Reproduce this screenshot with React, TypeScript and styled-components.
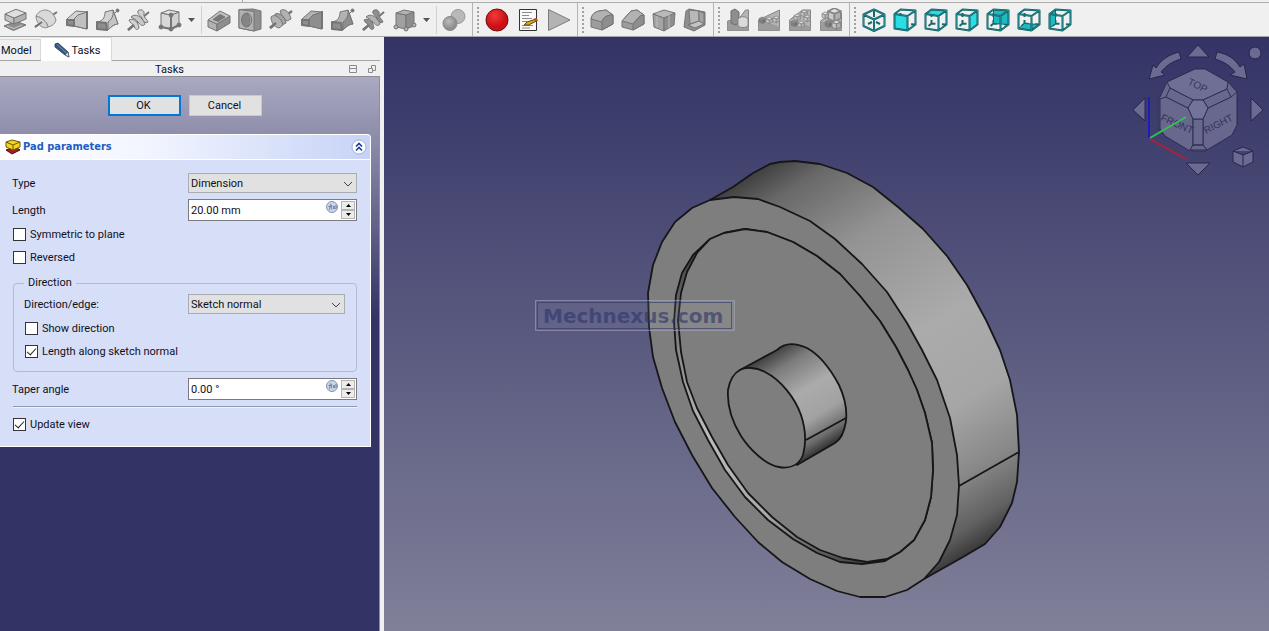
import React, { useState } from "react";
import styled, { createGlobalStyle } from "styled-components";

const GlobalStyle = createGlobalStyle`
  * { box-sizing: border-box; }
  body {
    margin: 0;
    font-family: Roboto, "Liberation Sans", sans-serif;
    font-size: 11px;
    line-height: 14px;
    color: #10101c;
    background: #f0f0f0;
  }
  button, input, select { font: inherit; color: inherit; }
`;

/* ---------- layout ---------- */

const Window = styled.div`
  display: flex;
  flex-direction: column;
  height: 100vh;
  overflow: hidden;
`;

const TopStrip = styled.div`
  height: 3px;
  padding-left: 242px;
  border-bottom: 1px solid #adadad;
  flex: none;
  &::before {
    content: "";
    display: block;
    width: 1px;
    height: 2px;
    background: #a8a8a8;
  }
`;

const ToolbarRow = styled.div`
  display: flex;
  flex: none;
  height: 34px;
  background: #f0f0f0;
  border-bottom: 1px solid #a6a6a8;
`;

const ToolGroup = styled.div<{ $grip?: boolean }>`
  display: flex;
  align-items: center;
  padding-right: 2px;
  border-left: ${(p) => (p.$grip ? "1px solid #b4b4b4" : "none")};
`;

const Grip = styled.span`
  width: 3px;
  height: 26px;
  margin: 0 2px 0 4px;
  background: radial-gradient(circle at 1px 1px, #a0a0a0 1px, transparent 1px) 0 0 / 3px 4px;
`;

const ToolButton = styled.button`
  display: flex;
  align-items: center;
  width: 31px;
  height: 32px;
  padding: 0 4px 0 3px;
  border: 0;
  background: none;
`;

const MenuArrow = styled.button`
  width: 12px;
  height: 32px;
  padding: 0 0 0 2px;
  border: 0;
  background: none;
  display: flex;
  align-items: center;
`;

const Divider = styled.span`
  width: 1px;
  height: 28px;
  margin: 0 2px 0 3px;
  background: #d2d2d2;
`;

const Main = styled.div`
  display: flex;
  flex: 1;
  min-height: 0;
`;

const Side = styled.aside`
  display: flex;
  flex-direction: column;
  flex: none;
  width: 384px;
  padding-right: 4px;
  background: #f0f0f0;
`;

const Tabs = styled.div`
  display: flex;
  align-items: flex-end;
  height: 24px;
  border-bottom: 1px solid #a4a4a4;
`;

const Tab = styled.button<{ $active?: boolean }>`
  display: flex;
  align-items: center;
  gap: 1px;
  height: ${(p) => (p.$active ? 24 : 21)}px;
  margin-bottom: ${(p) => (p.$active ? -1 : 0)}px;
  padding: ${(p) => (p.$active ? "2px 11px 0 12px" : "2px 8px 0 1px")};
  border: 1px solid #d9d9d9;
  border-bottom: 0;
  border-left-width: 0;
  background: ${(p) => (p.$active ? "#ffffff" : "#f0f0f0")};
`;

const DockTitle = styled.div`
  display: flex;
  align-items: center;
  height: 16px;
  padding: 2px 3px 0 0;
  border-bottom: 1px solid #8c8c94;
`;

const DockName = styled.span`
  flex: 1;
  text-align: center;
`;

const DockButton = styled.button`
  display: flex;
  padding: 0;
  margin-left: 10px;
  border: 0;
  background: none;
`;

const TaskArea = styled.div`
  flex: 1;
  padding-right: 8px;
  border-right: 1px solid #8c8c9c;
  background: linear-gradient(#a9a9c1 0, #8686a6 75px, #333366 240px);
`;

const ButtonBar = styled.div`
  display: flex;
  justify-content: center;
  gap: 8px;
  padding: 18px 1px 18px 0;
`;

const PushButton = styled.button<{ $primary?: boolean }>`
  width: 73px;
  height: 21px;
  padding: 1px 2px 0 0;
  border: ${(p) => (p.$primary ? "2px solid #0078d7" : "1px solid #c9c9cc")};
  background: #e1e1e1;
`;

const Card = styled.section`
  border: 1px solid #ffffff;
  border-left: 0;
  border-radius: 0 4px 0 0;
  background: #d6dff7;
`;

const CardHeader = styled.header`
  display: flex;
  align-items: center;
  gap: 2px;
  height: 25px;
  padding: 0 3px 0 5px;
  border-bottom: 1px solid #ffffff;
  border-radius: 0 4px 0 0;
  background: linear-gradient(90deg, #ffffff, #f2f5fe 40%, #c7d3f7);
`;

const CardTitle = styled.h2`
  flex: 1;
  margin: 0;
  font-family: "DejaVu Sans Condensed", "DejaVu Sans", sans-serif;
  font-size: 11px;
  line-height: 16px;
  font-weight: 700;
  color: #215dc6;
`;

const Collapse = styled.button`
  display: flex;
  padding: 0;
  border: 0;
  background: none;
`;

const Form = styled.form`
  padding: 13px 13px 14px 12px;
`;

const Field = styled.div<{ $label?: number }>`
  display: grid;
  grid-template-columns: ${(p) => p.$label ?? 176}px minmax(0, 1fr);
  align-items: center;
  label { padding-top: 2px; }
`;

const Stack = styled.div<{ $gap: number; $top?: number }>`
  display: flex;
  flex-direction: column;
  gap: ${(p) => p.$gap}px;
  margin-top: ${(p) => p.$top ?? 0}px;
`;

const SelectBox = styled.div`
  position: relative;
  svg { position: absolute; right: 4px; top: 8px; pointer-events: none; }
`;

const Select = styled.select`
  display: block;
  appearance: none;
  width: 100%;
  height: 20px;
  padding: 1px 2px 0;
  border: 1px solid #a9adb0;
  border-radius: 0;
  background: #e1e1e1;
`;

const SpinFrame = styled.div`
  display: flex;
  height: 22px;
  padding: 1px;
  border: 1px solid #7a7a80;
  background: #ffffff;
`;

const SpinInput = styled.input`
  flex: 1;
  width: 0;
  min-width: 0;
  padding: 2px 1px 0;
  border: 0;
  outline: 0;
  background: transparent;
`;

const FxButton = styled.button`
  display: flex;
  height: 12px;
  padding: 0;
  margin-right: 3px;
  border: 0;
  background: none;
`;

const SpinButtons = styled.div`
  display: flex;
  flex-direction: column;
  width: 14px;
`;

const SpinButton = styled.button`
  display: flex;
  align-items: center;
  justify-content: center;
  flex: 1;
  padding: 0;
  border: 1px solid #b4b4b4;
  background: #ececec;
`;

const CheckLabel = styled.label`
  display: flex;
  align-items: center;
  gap: 4px;
  height: 15px;
  padding-left: 1px;
  line-height: 16px;
`;

const CheckInput = styled.input`
  appearance: none;
  display: grid;
  place-items: center;
  flex: none;
  width: 13px;
  height: 13px;
  margin: 0;
  border: 1px solid #333338;
  background: #ffffff;
  &:checked::after {
    content: "";
    width: 8px;
    height: 4px;
    margin-top: -2px;
    border-left: 1px solid #222;
    border-bottom: 1px solid #222;
    transform: rotate(-48deg);
  }
`;

const Group = styled.fieldset`
  min-width: 0;
  margin: 11px 0 6px 1px;
  padding: 4px 11px 12px 10px;
  border: 1px solid #b3bccb;
  border-radius: 4px;
`;

const Legend = styled.legend`
  padding: 0 4px;
  line-height: 14px;
`;

const Rule = styled.hr`
  height: 2px;
  margin: 6px 0 9px 1px;
  border: 0;
  border-top: 1px solid #8d9bb0;
  border-bottom: 1px solid #eef2fd;
`;

const Viewport = styled.main`
  position: relative;
  flex: 1;
  min-width: 0;
  background: linear-gradient(#333366, #808099);
`;

const Scene = styled.svg`
  display: block;
  width: 100%;
  height: 100%;
`;

const NavCube = styled.svg`
  position: absolute;
  top: 0;
  right: 0;
`;

/* ---------- toolbar icons ---------- */

const L = "#d2d2d2";
const M = "#b2b2b2";
const D = "#8e8e8e";
const S = "#757575";

const Icon = ({ children, stroke = S }: { children: React.ReactNode; stroke?: string }) => (
  <svg width="24" height="24" viewBox="0 0 24 24" stroke={stroke} strokeWidth="1" strokeLinejoin="round" fill={M}>
    {children}
  </svg>
);

const Pad = () => (
  <Icon>
    <path d="M1 18l9.500 4.500 12.500-5.500-8-3-9 2z" fill={D} />
    <path d="M4 18l7 2.500 8-3.500" fill="none" stroke="#c8c8c8" />
    <path d="M2 6l9 4v6l-9-4z" fill="#c4c4c4" />
    <path d="M11 10l12-5v6l-12 5z" fill={M} />
    <path d="M2 6l11-4.700 10 3.700-12 5z" fill="#dedede" />
  </Icon>
);
const Revolution = () => (
  <Icon>
    <path d="M1 19l22-15" strokeWidth="2" />
    <path d="M2 8c2-4 6-6 9-6 5 0 9 4 11 10-1 4-4 6-8 7-1-5-5-9-12-11z" fill="#d9d9d9" stroke="#8a8a8a" />
    <path d="M2 8c0 5 3 9 6 11 2 1 5 1 6 0-1-5-5-9-12-11z" fill={L} stroke="#8a8a8a" />
    <path d="M1 19l7-5" strokeWidth="2" />
  </Icon>
);
const Groove = () => (
  <Icon>
    <path d="M1 20l22-17" strokeWidth="2.500" />
    <path d="M11 3c5-4 10 2 11 8l-4 2c-3-2-6-6-7-10z" fill={M} />
    <path d="M6 6c5-2 10 3 11 9l-4 2c-4-2-7-6-7-11z" fill="#a2a2a2" />
    <path d="M2 9c4-4 10 1 12 8l-4 3c-5-1-8-6-8-11z" fill={M} />
    <path d="M1 20l6-5" strokeWidth="2.500" />
  </Icon>
);
const Loft = ({ dark }: { dark?: boolean }) => (
  <Icon>
    <path d="M2 11l9-8 11 1v17l-13-3-7-1z" fill={dark ? M : "#d4d4d4"} />
    <path d="M9 11l4-4 9-3v17l-13-3z" fill={dark ? D : "#c0c0c0"} />
    <path d="M22 3v18" strokeWidth="2" />
    <path d="M2 12h7v6l-7-1z" fill={D} strokeWidth="2" />
  </Icon>
);
const Pipe = ({ dark }: { dark?: boolean }) => (
  <Icon>
    <path d="M1 14c7-1 8-6 8-10l8-2 5 14c-4 0-7 3-10 6l-11-1z" fill={dark ? M : L} />
    <path d="M12 14c3-2 6-6 5-12l5 14c-4 0-7 3-10 6z" fill={dark ? D : "#c4c4c4"} />
    <path d="M1 14l9 1 1 7-10-1z" fill={D} strokeWidth="2" />
    <path d="M18 6l3-3" />
    <circle cx="21.500" cy="2.500" r="1.500" fill={S} />
  </Icon>
);
const Helix = ({ dark }: { dark?: boolean }) => (
  <Icon>
    <path d="M1 22l21-18" strokeWidth="2" />
    <path d="M11 3c3-3 7 0 6 3s3 5 4 8c-3 2-5-1-6-4-2-3-5-4-4-7z" fill={dark ? D : L} />
    <path d="M4 9c4-4 11-1 14 7-2 3-5 1-7-2-2-2-5-4-7-5z" fill={dark ? M : "#c8c8c8"} />
    <path d="M2 12c3-2 9 0 10 8-2 3-4 1-5-2-1-2-4-3-5-6z" fill={dark ? D : L} />
    <path d="M1 22l6-5" strokeWidth="2.500" />
  </Icon>
);
const Primitive = ({ dark }: { dark?: boolean }) => (
  <Icon>
    <path d="M3 5l10 2v14l-10-2z" fill={dark ? "#a0a0a0" : "#d8d8d8"} />
    <path d="M13 7l8-3v14l-8 3z" fill={dark ? D : L} />
    <path d="M3 5l8-3 10 2-8 3z" fill={dark ? M : "#e2e2e2"} />
    <g fill={dark ? M : S}>
      <circle cx="3" cy="19" r="2" />
      <circle cx="13" cy="21" r="2" />
      <circle cx="21" cy="17" r="2" />
      {!dark && <circle cx="13" cy="7" r="2" />}
    </g>
    {!dark && <path d="M13 7v14M3 19l10 2 8-4" fill="none" strokeWidth="2" />}
  </Icon>
);
const Pocket = () => (
  <Icon>
    <path d="M1 12l9 4v7l-9-4z" fill={M} />
    <path d="M10 16l13-8v7l-13 8z" fill={D} />
    <path d="M1 12l12-9 10 5-13 8z" fill="#c0c0c0" />
    <path d="M6 11.500l7-5 5 2.500-7 4.500z" fill="#777" />
  </Icon>
);
const Hole = () => (
  <Icon>
    <path d="M1 1.500l14-.5 8 2v18l-7 2-15-3z" fill={D} />
    <path d="M1 1.500l15 2v19.500l-15-3z" fill={M} />
    <ellipse cx="8.500" cy="12" rx="5" ry="7" fill="#858585" />
    <path d="M9 6c4 3 4 9 1 12 3-1 4-4 3.500-7-.5-3-2-5-4.500-5z" fill="#d0d0d0" />
  </Icon>
);
const Spheres = () => (
  <Icon>
    <defs>
      <radialGradient id="ball" cx="40%" cy="35%">
        <stop offset="0" stopColor="#bcbcbc" />
        <stop offset="1" stopColor="#8f8f8f" />
      </radialGradient>
    </defs>
    <circle cx="16" cy="8.500" r="7" fill="#b8b8b8" stroke="#9a9a9a" />
    <circle cx="8" cy="15.500" r="7" fill="url(#ball)" stroke="#888" />
  </Icon>
);
const Record = () => (
  <Icon stroke="#6b0f12">
    <defs>
      <radialGradient id="rec" cx="40%" cy="30%">
        <stop offset="0" stopColor="#ee3a3a" />
        <stop offset="1" stopColor="#cc1114" />
      </radialGradient>
    </defs>
    <circle cx="12" cy="12" r="11" fill="url(#rec)" />
  </Icon>
);
const Macro = () => (
  <Icon stroke="#333">
    <path d="M3.500 1.500h17v21h-17z" fill="#fbfbf6" />
    <path d="M6 4.500h10M6 7.500h7M6 10.500h10M6 13.500h5M6 17.500h11M6 20h8" stroke="#8c8c8c" fill="none" />
    <path d="M8 17l3-3 9-3 1.500 1.500-9 4.500z" fill="#e0a81c" stroke="#5f4a12" />
    <path d="M17 11l2 2 2.500-1.500-1-1.500z" fill="#b6462a" stroke="none" />
  </Icon>
);
const Play = () => (
  <Icon stroke="#7c7c7c">
    <path d="M1.500 1.500l21.500 10.500-21.500 10.500z" fill="#b3b3b3" />
  </Icon>
);
const Fillet = () => (
  <Icon>
    <path d="M1 11c1-5 4-7 8-8l7-1 7 5v9l-11 6-11-3z" fill="#9c9c9c" />
    <path d="M1 11c1-5 4-7 8-8l7-1 7 5c-6 0-10 2-11 7z" fill={M} />
    <path d="M12 14v8l11-6V7c-6 0-10 2-11 7z" fill={D} />
  </Icon>
);
const Chamfer = () => (
  <Icon>
    <path d="M1 13l9-10 6-1 7 5v9l-11 6-11-3z" fill="#9c9c9c" />
    <path d="M1 13l9-10 6-1 7 5-4 1-7 8z" fill={M} />
    <path d="M12 16v6l11-6V7l-4 1z" fill={D} />
  </Icon>
);
const Draft = () => (
  <Icon>
    <path d="M1 6l11 4v13l-10-4z" fill="#a4a4a4" />
    <path d="M12 10l11-5-1 12-10 6z" fill={D} />
    <path d="M1 6l11-4 11 3-11 5z" fill="#b8b8b8" />
    <path d="M5 8v11M17 8v12M5 5l13 2" fill="none" stroke="#bcbcbc" />
  </Icon>
);
const Thickness = () => (
  <Icon>
    <path d="M3 3l3-2 16 3v13l-11 6-10-4z" fill={D} />
    <path d="M6 2l10 1v10l-9 3z" fill="#b8b8b8" />
    <path d="M16 3l5 2v11l-5-3z" fill="#a2a2a2" />
    <path d="M5 17l11-4 5 3-9 4z" fill="#c4c4c4" />
  </Icon>
);
const Ramp = ({ top, children }: { top: string; children?: React.ReactNode }) => (
  <Icon stroke="#858585">
    <path d={top} fill="#b4b4b4" />
    <path d="M1.500 13c6 2 14 2 21 6v3.500h-21z" fill="#9c9c9c" stroke="none" />
    {children}
  </Icon>
);
const MiniCube = ({ x, y, s, dark }: { x: number; y: number; s: number; dark?: boolean }) => (
  <g transform={`translate(${x} ${y}) scale(${s})`}>
    <path d="M0 2l4 1.500v5l-4-2z" fill={dark ? "#7c7c7c" : "#c9c9c9"} />
    <path d="M4 3.500l4-1.500v4.500l-4 2z" fill={dark ? "#6c6c6c" : "#aeaeae"} />
    <path d="M0 2l4-2 4 2-4 1.500z" fill={dark ? "#8c8c8c" : "#e0e0e0"} />
  </g>
);
const Mirrored = () => (
  <Ramp top="M1.500 13l12-3 6-8h3v20.500h-21z">
    <path d="M5 3l4-2 4 3v11l-4 2-4-2z" fill={D} stroke="#6c6c6c" />
    <path d="M12 11c2-3 8-3 10 0v7c-3 2-7 2-10 0z" fill="#dadada" />
  </Ramp>
);
const LinearPattern = () => (
  <Ramp top="M1.500 12l21-10v20.500h-21z">
    <MiniCube x={2} y={9} s={0.8} dark />
    <MiniCube x={9} y={9} s={0.8} />
    <MiniCube x={16} y={8} s={0.8} />
  </Ramp>
);
const PolarPattern = () => (
  <Ramp top="M1.500 12l13-10h8v20.500h-21z">
    <MiniCube x={3} y={12} s={0.8} dark />
    <MiniCube x={6} y={6} s={0.8} />
    <MiniCube x={13} y={2} s={0.8} />
    <MiniCube x={16} y={7} s={0.8} />
    <MiniCube x={10} y={13} s={0.8} />
  </Ramp>
);
const MultiTransform = () => (
  <Ramp top="M1.500 13l12-8h9v17.500h-21z">
    <MiniCube x={9} y={0} s={1.6} />
    <MiniCube x={3} y={4} s={0.8} />
    <MiniCube x={6} y={12} s={0.9} dark />
    <MiniCube x={13} y={12} s={1.1} />
  </Ramp>
);

const faces: Record<string, string> = {
  front: "M1.500 6l13 2v14.500l-13-2z",
  top: "M1.500 6l6-4.500 15 1-8 5.500z",
  right: "M14.500 8l8-5.500v14l-8 6z",
  rear: "M7.500 1.500l15 1v14l-15-1z",
  bottom: "M1.500 20.500l6-5 15 1-8 6z",
  left: "M1.500 6l6-4.500v14l-6 5z",
};
const ViewCube = ({ face }: { face: string }) => {
  const behind = face === "rear" || face === "bottom" || face === "left";
  const frame = "M1.500 6l13 2v14.500l-13-2zM1.500 6l6-4.500 15 1-8 5.500M22.500 2.500v14l-8 6";
  return (
    <Icon stroke="none">
      <path d="M7.500 5v4M7.500 12v3.500l-3 2.500M7.500 15.500l4 .3M18 16.200l4 .3" fill="none" stroke="#17696e" strokeWidth="2" />
      <path d={faces[face]} fill={behind ? "#1fb9c2" : "#2bdde3"} stroke="#12666b" strokeWidth="1" />
      <path d={frame} fill="none" stroke="#0f5e63" strokeWidth="2" />
      <path d={frame} fill="none" stroke="#2a9da2" strokeWidth="0.600" />
    </Icon>
  );
};
const IsoCube = () => {
  const frame = "M12 1.500l10.500 5v11.500l-10.500 5-10.500-5v-11.500zM1.500 6.500l10.500 5 10.500-5M12 11.500v11.500";
  return (
    <Icon stroke="none">
      <path d="M12 3v6M6 16l4-2M18 16l-4-2" stroke="#17696e" strokeWidth="2" />
      <path d={frame} fill="none" stroke="#0f5e63" strokeWidth="2" />
      <path d={frame} fill="none" stroke="#2fa6aa" strokeWidth="0.600" />
    </Icon>
  );
};

type Tool = [string, React.ReactNode];

const additive: Tool[] = [
  ["Pad", <Pad />],
  ["Revolution", <Revolution />],
  ["Additive loft", <Loft />],
  ["Additive pipe", <Pipe />],
  ["Additive helix", <Helix />],
  ["Additive primitive", <Primitive />],
];
const subtractive: Tool[] = [
  ["Pocket", <Pocket />],
  ["Hole", <Hole />],
  ["Groove", <Groove />],
  ["Subtractive loft", <Loft dark />],
  ["Subtractive pipe", <Pipe dark />],
  ["Subtractive helix", <Helix dark />],
  ["Subtractive primitive", <Primitive dark />],
];
const groups: Tool[][] = [
  [
    ["Record macro", <Record />],
    ["Macros", <Macro />],
    ["Execute macro", <Play />],
  ],
  [
    ["Fillet", <Fillet />],
    ["Chamfer", <Chamfer />],
    ["Draft", <Draft />],
    ["Thickness", <Thickness />],
  ],
  [
    ["Mirrored", <Mirrored />],
    ["Linear pattern", <LinearPattern />],
    ["Polar pattern", <PolarPattern />],
    ["Multi transform", <MultiTransform />],
  ],
  [
    ["Isometric view", <IsoCube />],
    ...["front", "top", "right", "rear", "bottom", "left"].map((f): Tool => [`${f} view`, <ViewCube face={f} />]),
  ],
];

const Tools = ({ items }: { items: Tool[] }) => (
  <>
    {items.map(([name, icon]) => (
      <ToolButton key={name} type="button" aria-label={name}>
        {icon}
      </ToolButton>
    ))}
  </>
);

const DropArrow = ({ label }: { label: string }) => (
  <MenuArrow type="button" aria-label={label}>
    <svg width="7" height="4" viewBox="0 0 7 4">
      <path d="M0 0h7l-3.500 4z" fill="#555" />
    </svg>
  </MenuArrow>
);

/* ---------- form controls ---------- */

const Dropdown = ({ id, value }: { id: string; value: string }) => (
  <SelectBox>
    <Select id={id} defaultValue={value}>
      <option>{value}</option>
    </Select>
    <svg width="10" height="6" viewBox="0 0 10 6">
      <path d="M1 1l4 4 4-4" fill="none" stroke="#444" />
    </svg>
  </SelectBox>
);

const Spin = ({ id, value }: { id: string; value: string }) => (
  <SpinFrame>
    <SpinInput id={id} defaultValue={value} />
    <FxButton type="button" aria-label="Expression">
      <svg width="12" height="12" viewBox="0 0 12 12">
        <circle cx="6" cy="6" r="5.500" fill="#c9d6e8" stroke="#8095b5" />
        <path d="M3 9c1 0 1-5 2-6M2.500 5.500h2M6 4c-1 1-1 3 0 4.500M7 5l2 3M9 5l-2 3M9.500 4c1 1 1 3 0 4" fill="none" stroke="#54698c" strokeWidth="0.800" />
      </svg>
    </FxButton>
    <SpinButtons>
      <SpinButton type="button" aria-label="Increase">
        <svg width="5" height="3" viewBox="0 0 5 3"><path d="M0 3h5l-2.500-3z" /></svg>
      </SpinButton>
      <SpinButton type="button" aria-label="Decrease">
        <svg width="5" height="3" viewBox="0 0 5 3"><path d="M0 0h5l-2.500 3z" /></svg>
      </SpinButton>
    </SpinButtons>
  </SpinFrame>
);

const Check = ({ label, checked }: { label: string; checked?: boolean }) => {
  const [on, setOn] = useState(!!checked);
  return (
    <CheckLabel>
      <CheckInput type="checkbox" checked={on} onChange={() => setOn(!on)} />
      {label}
    </CheckLabel>
  );
};

/* ---------- 3D view ---------- */

const rimFront =
  "710,200 734,197 758,199 780,207 810,221 835,239 862,264 887,292 907,323 922,350 937,380 950,418 957,455 959,486 957,515 950,540 939,562 924,579 907,590 885,597 860,597 837,591 810,579 782,562 758,542 735,517 712,488 692,455 675,422 662,388 653,357 649,327 648,293 653,265 662,242 675,222 692,208";
const rimSide =
  "710,200 733,187 753,173 770,164 780,162 795,161 820,164 847,173 873,187 898,207 923,229 947,256 967,285 986,320 1000,350 1010,380 1017,415 1019,452 1017,482 1012,503 1000,527 985,544 963,557 924,579 880,540 700,260";
const recessRim =
  "710,239 724,233 745,229 767,232 793,242 817,256 840,274 860,296 880,321 896,347 908,370 917,390 925,413 932,443 933,470 931,497 925,520 914,540 900,552 885,561 862,564 840,562 817,553 793,539 768,520 745,497 725,470 708,440 693,411 683,382 676,350 674,322 676,295 682,273 693,255";
const recessFloor =
  "710,239 697,253 687,272 681,293 678,320 681,352 687,382 697,408 712,437 728,465 748,493 772,517 797,537 820,550 843,558 867,562 887,559";
const hubFront =
  "M740 370C745 367 756 367 765 372C781 380 795 398 801 415C806 430 806 444 803 455C799 465 790 469 779 467C766 465 750 450 741 436C731 420 727 405 728 390C730 379 734 373 740 370z";
const hubSide =
  "M740 370L777 350C785 342 796 343 807 348C820 355 832 372 839 385C845 398 847 412 846 421C844 434 840 440 835 443L797 465L770 430z";

const Model = () => (
  <Scene viewBox="384 37 885 594" role="img" aria-label="Padded wheel">
    <defs>
      <linearGradient id="rim" gradientUnits="userSpaceOnUse" x1="720" y1="190" x2="960" y2="575">
        <stop offset="0" stopColor="#3c3c3c" />
        <stop offset="0.080" stopColor="#686868" />
        <stop offset="0.250" stopColor="#939393" />
        <stop offset="0.500" stopColor="#ababab" />
        <stop offset="0.680" stopColor="#a6a6a6" />
        <stop offset="0.820" stopColor="#888888" />
        <stop offset="0.920" stopColor="#606060" />
        <stop offset="1" stopColor="#242424" />
      </linearGradient>
      <linearGradient id="hub" gradientUnits="userSpaceOnUse" x1="740" y1="370" x2="800" y2="466">
        <stop offset="0" stopColor="#3c3c3c" />
        <stop offset="0.180" stopColor="#7c7c7c" />
        <stop offset="0.450" stopColor="#ababab" />
        <stop offset="0.700" stopColor="#a2a2a2" />
        <stop offset="0.880" stopColor="#6c6c6c" />
        <stop offset="1" stopColor="#2c2c2c" />
      </linearGradient>
      <linearGradient id="step" gradientUnits="userSpaceOnUse" x1="0" y1="240" x2="0" y2="565">
        <stop offset="0" stopColor="#3a3a3a" />
        <stop offset="0.300" stopColor="#808080" />
        <stop offset="0.600" stopColor="#bcbcbc" />
        <stop offset="0.850" stopColor="#a8a8a8" />
        <stop offset="1" stopColor="#444" />
      </linearGradient>
    </defs>
    <g stroke="#16161a" strokeWidth="1.800" strokeLinejoin="round">
      <polygon points={rimSide} fill="url(#rim)" />
      <polygon points={rimFront} fill="#7e7e7e" />
      <path d="M959 486L1019 452" />
      <polygon points={recessRim} fill="url(#step)" />
      <polygon points={`${recessFloor} 900,552 914,540 925,520 931,497 933,470 932,443 925,413 917,390 908,370 896,347 880,321 860,296 840,274 817,256 793,242 767,232 745,229 724,233`} fill="#7e7e7e" />
      <path d={hubSide} fill="url(#hub)" />
      <path d={hubFront} fill="#7e7e7e" />
      <path d="M806 440L846 418" />
    </g>
    <g>
      <rect x="535.500" y="300.500" width="199" height="30" fill="#ffffff" fillOpacity="0.070" stroke="#a9a9bd" strokeOpacity="0.550" />
      <rect x="537.500" y="302.500" width="194" height="26" fill="none" stroke="#2c3568" strokeOpacity="0.600" />
      <text x="543" y="323" fontFamily="DejaVu Sans" fontWeight="700" fontSize="20" fill="#29346b" fillOpacity="0.600">
        Mechnexus.com
      </text>
    </g>
  </Scene>
);

const Navigation = () => (
  <NavCube width="149" height="145" viewBox="1120 36 149 145" role="img" aria-label="Navigation cube">
    <g fill="#6a6a92" stroke="#26264a" strokeLinejoin="round">
      <path d="M1198 44l11 12h-22z" />
      <path d="M1198 174l-12-12h24z" />
      <path d="M1133 109l12-12v23z" />
      <path d="M1263 109l-12-12v23z" />
      <path d="M1179 51l2 7c-10 3-15 7-20 13l4 3-16 4 4-14 3 3c5-8 12-13 23-16z" />
      <path d="M1217 51l-2 7c10 3 15 7 20 13l-5 3 17 4-3-15-4 3c-5-8-12-13-23-15z" />
      <circle cx="1255" cy="52" r="6" />
      <path d="M1233 150l10-4 10 4v11l-10 5-10-5zM1233 150l10 4 10-4M1243 154v12" />
    </g>
    <g fill="#68688f" stroke="#2e2e52" strokeLinejoin="round">
      <path d="M1195 68h10l23 13 9 10v33l-5 10-27 16h-12l-28-15-6-7V98l8-17z" />
      <path d="M1195 68h10l23 13-1 7-24 11h-10l-23-12-3-6z" fill="#6f6f96" />
      <path d="M1160 98l6-2 22 11 5 11v26l-3 6-25-15-5-7z" />
      <path d="M1237 91l-6 5-23 11-5 11v26l4 5 25-15 5-10z" />
      <path d="M1170 87l23 12-5 8-22-11zM1203 99l24-11 4 8-23 11z" />
      <path d="M1193 118h10v26h-10zM1193 144h10l4 5h-17z" />
      <path d="M1193 99h10l5 8-5 11h-10l-5-11z" fill="#72729a" />
    </g>
    <g fontFamily="Liberation Sans" fill="#33335a" fontSize="10">
      <text x="1187" y="83" transform="rotate(26 1187 83)">TOP</text>
      <text x="1160" y="119" transform="rotate(24 1160 119)">FRONT</text>
      <text x="1206" y="133" transform="rotate(-27 1206 133)">RIGHT</text>
    </g>
    <g strokeWidth="2" fill="none">
      <path d="M1149 137V96" stroke="#1c1cc0" />
      <path d="M1150 137l36-21" stroke="#2fc257" />
      <path d="M1150 138l36 20" stroke="#b01f3c" />
    </g>
  </NavCube>
);

export default function App() {
  return (
    <Window>
      <GlobalStyle />
      <TopStrip />
      <ToolbarRow role="toolbar">
        <ToolGroup>
          <Tools items={additive} />
          <DropArrow label="More additive primitives" />
          <Divider />
          <Tools items={subtractive} />
          <DropArrow label="More subtractive primitives" />
          <Divider />
          <ToolButton type="button" aria-label="Boolean operation">
            <Spheres />
          </ToolButton>
        </ToolGroup>
        {groups.map((g, i) => (
          <ToolGroup key={i} $grip>
            <Grip />
            <Tools items={g} />
          </ToolGroup>
        ))}
      </ToolbarRow>
      <Main>
        <Side>
          <Tabs role="tablist">
            <Tab role="tab" type="button">Model</Tab>
            <Tab role="tab" type="button" aria-selected $active>
              <svg width="18" height="18" viewBox="0 0 18 18">
                <path d="M2 2l3-1 10 9 1 5-4-2-10-8z" fill="#35597e" stroke="#223c58" strokeWidth="0.800" />
                <path d="M4 2.500l10 9" stroke="#6d93b8" />
                <path d="M15 10l1 5-4-2z" fill="#d8dce0" stroke="#445" strokeWidth="0.600" />
              </svg>
              Tasks
            </Tab>
          </Tabs>
          <DockTitle>
            <DockName>Tasks</DockName>
            <DockButton type="button" aria-label="Toggle overlay">
              <svg width="9" height="9" viewBox="0 0 9 9"><path d="M.5.5h7v7h-7zM.5 3.500h7" fill="none" stroke="#8a8a8a" /></svg>
            </DockButton>
            <DockButton type="button" aria-label="Float">
              <svg width="9" height="9" viewBox="0 0 9 9"><path d="M.5 3.500h4v4h-4zM3.500 3V.5h4v5h-3" fill="none" stroke="#8a8a8a" /></svg>
            </DockButton>
          </DockTitle>
          <TaskArea>
            <ButtonBar>
              <PushButton type="button" $primary>OK</PushButton>
              <PushButton type="button">Cancel</PushButton>
            </ButtonBar>
            <Card>
              <CardHeader>
                <svg width="16" height="16" viewBox="0 0 16 16" strokeLinejoin="round">
                  <path d="M1 11l6 4 8-4-3-2-8 1z" fill="#a32020" stroke="#4d0d0d" />
                  <path d="M1 3l6-2 8 2v5l-7 3-7-3z" fill="#f2d51c" stroke="#6b5a08" />
                  <path d="M1 3l7 3 7-3M8 6v5" fill="none" stroke="#6b5a08" />
                </svg>
                <CardTitle>Pad parameters</CardTitle>
                <Collapse type="button" aria-label="Collapse">
                  <svg width="16" height="16" viewBox="0 0 16 16">
                    <circle cx="8" cy="8" r="7" fill="#ffffff" stroke="#9fb0dc" />
                    <path d="M5 7.500l3-3 3 3M5 11.500l3-3 3 3" fill="none" stroke="#1c3f94" strokeWidth="1.600" />
                  </svg>
                </Collapse>
              </CardHeader>
              <Form onSubmit={(e) => e.preventDefault()}>
                <Stack $gap={6}>
                  <Field>
                    <label htmlFor="type">Type</label>
                    <Dropdown id="type" value="Dimension" />
                  </Field>
                  <Field>
                    <label htmlFor="length">Length</label>
                    <Spin id="length" value="20.00 mm" />
                  </Field>
                </Stack>
                <Stack $gap={8} $top={6}>
                  <Check label="Symmetric to plane" />
                  <Check label="Reversed" />
                </Stack>
                <Group>
                  <Legend>Direction</Legend>
                  <Field $label={164}>
                    <label htmlFor="edge">Direction/edge:</label>
                    <Dropdown id="edge" value="Sketch normal" />
                  </Field>
                  <Stack $gap={8} $top={7}>
                    <Check label="Show direction" />
                    <Check label="Length along sketch normal" checked />
                  </Stack>
                </Group>
                <Field>
                  <label htmlFor="taper">Taper angle</label>
                  <Spin id="taper" value="0.00 °" />
                </Field>
                <Rule />
                <Check label="Update view" checked />
              </Form>
            </Card>
          </TaskArea>
        </Side>
        <Viewport>
          <Model />
          <Navigation />
        </Viewport>
      </Main>
    </Window>
  );
}
